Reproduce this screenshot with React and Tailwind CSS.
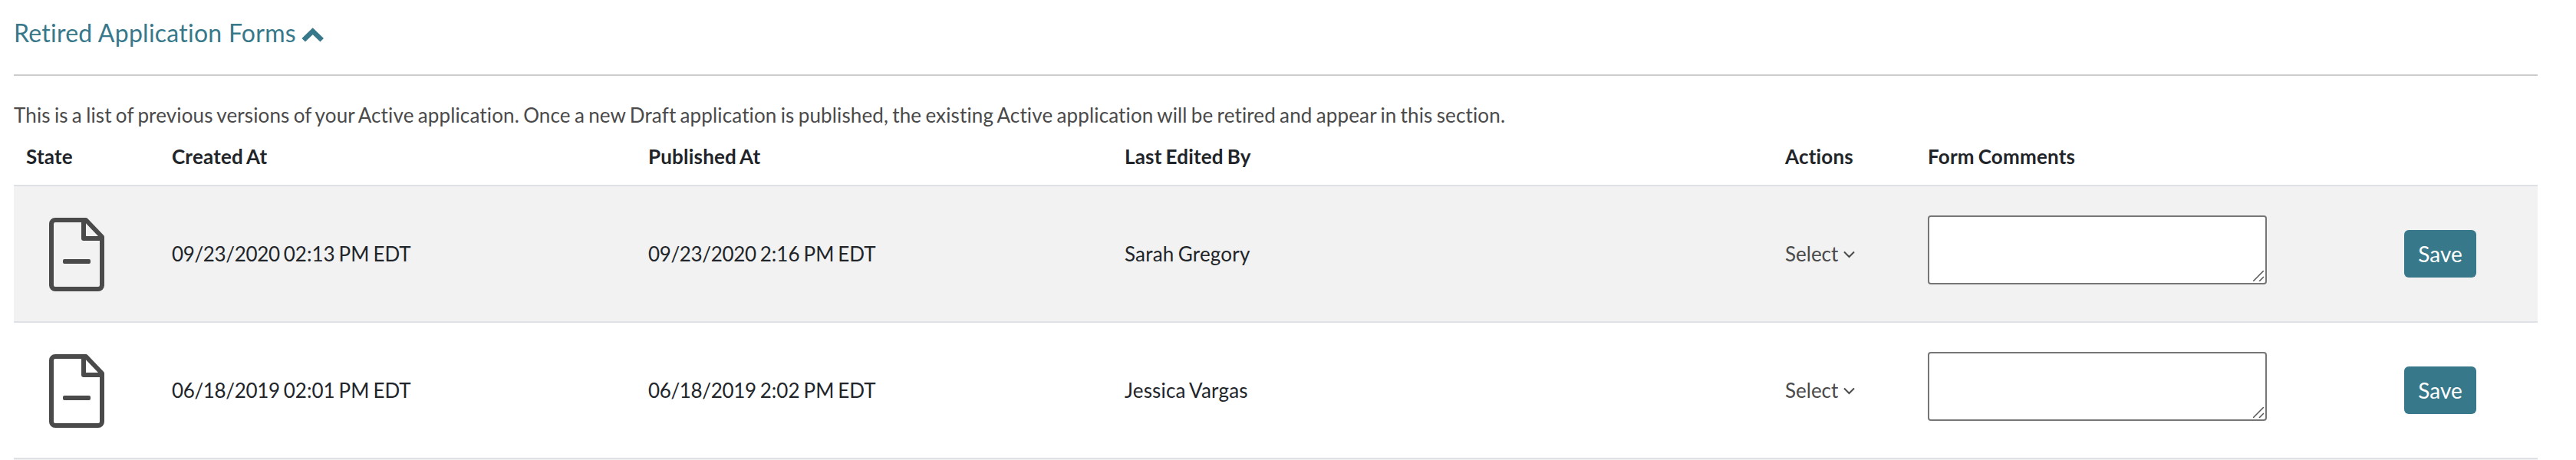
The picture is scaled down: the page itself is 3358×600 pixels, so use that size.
const rows = [
  { created: ['09/23/2020', '02:13 PM EDT'], published: ['09/23/2020', '2:16 PM EDT'], editor: 'Sarah Gregory' },
  { created: ['06/18/2019', '02:01 PM EDT'], published: ['06/18/2019', '2:02 PM EDT'], editor: 'Jessica Vargas' },
]

export default function App() {
  return (
    <div className="h-[600px] overflow-hidden bg-white pl-[18px] pr-[50px] text-[26px] leading-[39px] text-[#212529] font-['Lato',sans-serif] [font-variant-ligatures:none] [word-spacing:-1.6px]">
      <button className="flex h-[97px] w-full items-start gap-[7px] pt-[19px] text-left text-[32px] leading-[48px] tracking-[0.25px] text-[#37788a]">
        Retired Application Forms
        <ChevronUp />
      </button>
      <hr className="border-t-2 border-[#ccc]" />
      <p className="mt-8 tracking-[0.14px] text-[#4a4a4a]">
        This is a list of previous versions of your Active application. Once a new Draft application is published, the existing Active application will be retired and appear in this section.
      </p>
      <table className="w-full table-fixed border-collapse text-left">
        <colgroup>
          <col className="w-[190px]" />
          <col className="w-[621px]" />
          <col className="w-[621px]" />
          <col className="w-[861px]" />
          <col className="w-[186px]" />
          <col className="w-[621px]" />
          <col className="w-[190px]" />
        </colgroup>
        <thead>
          <tr className="h-[72px] align-top">
            <Th>State</Th>
            <Th>Created At</Th>
            <Th>Published At</Th>
            <Th>Last Edited By</Th>
            <Th>Actions</Th>
            <Th>Form Comments</Th>
            <Th />
          </tr>
        </thead>
        <tbody>
          {rows.map((row) => (
            <tr key={row.editor} className="h-[178px] border-t-2 border-[#dee2e6] odd:bg-[#f2f2f2]">
              <td className="pt-[2px] pl-[46px]"><FileIcon /></td>
              <td className="px-4"><Timestamp value={row.created} /></td>
              <td className="px-4"><Timestamp value={row.published} /></td>
              <td className="px-4 tracking-[0.2px]">{row.editor}</td>
              <td className="px-4">
                <button className="flex items-center gap-[7px] text-[#4a4a4a]">
                  Select
                  <ChevronDown />
                </button>
              </td>
              <td className="px-4 pb-[10px]">
                <CommentBox />
              </td>
              <td className="px-4">
                <button className="block h-[62px] w-[94px] rounded-md bg-[#37788a] text-center text-[28px] text-white">Save</button>
              </td>
            </tr>
          ))}
          <tr className="h-[178px] border-t-2 border-[#dee2e6] bg-[#f2f2f2]">
            <td colSpan={7} />
          </tr>
        </tbody>
      </table>
    </div>
  )
}

function Th({ children }) {
  return <th className="px-4 pt-[15px] font-bold tracking-[0.2px]">{children}</th>
}

function Timestamp({ value: [date, time] }) {
  return (
    <>
      <span className="tracking-[-0.35px]">{date}</span> {time}
    </>
  )
}

function CommentBox() {
  return (
    <div className="relative h-[90px] w-[442px]">
      <textarea className="block h-full w-full resize-none rounded-sm border-2 border-[#767676] bg-white" />
      <svg className="absolute right-1 bottom-1 size-[14px]" viewBox="0 0 14 14" fill="none" stroke="#555" strokeWidth="1.5">
        <path d="M0 14L14 0M8 14L14 8" />
      </svg>
    </div>
  )
}

function FileIcon() {
  return (
    <svg className="block h-[96px] w-[72px]" viewBox="0 0 72 96" fill="none" stroke="#4a4a4a" strokeWidth="6" strokeLinejoin="round">
      <path d="M8 3H48L69 25V88a5 5 0 0 1-5 5H8a5 5 0 0 1-5-5V8a5 5 0 0 1 5-5Z" />
      <path d="M45 3V27H69" />
      <rect x="18" y="54" width="36" height="6" rx="2" fill="#4a4a4a" stroke="none" />
    </svg>
  )
}

function ChevronUp() {
  return (
    <svg className="mt-[17px] h-5 w-[30px]" viewBox="0 0 30 20" fill="none" stroke="currentColor" strokeWidth="6.4">
      <path d="M2.7 16.3L14.7 4.6L26.7 16.3" />
    </svg>
  )
}

function ChevronDown() {
  return (
    <svg className="mt-[2px] h-[10px] w-[15px]" viewBox="0 0 15 10" fill="none" stroke="currentColor" strokeWidth="2">
      <path d="M1 1.5L7.5 8L14 1.5" />
    </svg>
  )
}
